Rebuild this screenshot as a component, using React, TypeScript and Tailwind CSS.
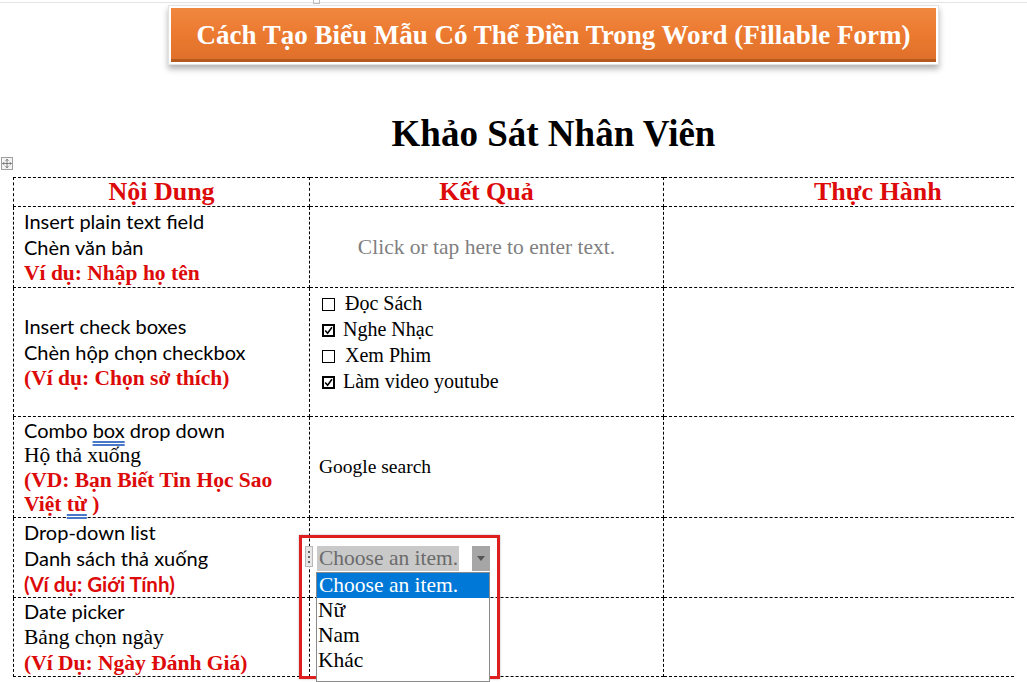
import { Move } from "lucide-react";

const serif = "font-['Liberation_Serif','Times_New_Roman',serif]";
const sans = "font-['Lato','Noto_Sans',sans-serif]";
const red = "text-[#dd0a0a]";

function CheckBox({ checked }: { checked?: boolean }) {
  return (
    <span
      className={`relative inline-block h-[13px] w-[13px] align-[-1px] ${
        checked ? "mr-[8px] border-2 border-black" : "mr-[5px] border border-black"
      }`}
    >
      {checked && (
        <svg viewBox="0 0 9 9" className="absolute left-0 top-0 h-[9px] w-[9px]">
          <path d="M1.2 4.5 L3.6 7.2 L8 1.2" fill="none" stroke="#000" strokeWidth="1.6" />
        </svg>
      )}
    </span>
  );
}

function DropdownOverlay() {
  return (
    <div className="absolute left-[299px] top-[535px] h-[144px] w-[201px] border-[3px] border-[#de1f1f] shadow-[0_0_2px_rgba(0,0,0,0.3)]">
      {/* handle */}
      <div className="absolute left-[3px] top-[8px] flex h-[21px] w-[8px] flex-col items-center justify-center gap-[3px] border border-[#b8b8b8] bg-[#e6e6e6]">
        <span className="h-[2px] w-[2px] bg-[#666]" />
        <span className="h-[2px] w-[2px] bg-[#666]" />
        <span className="h-[2px] w-[2px] bg-[#666]" />
      </div>
      {/* combo field */}
      <div className={`absolute left-[15px] top-[8px] flex h-[25px] w-[173px] items-center ${serif}`}>
        <div className="flex h-full items-center bg-[#c9c9c9] pl-[2px] pr-[1px] text-[21.5px] leading-none text-[#6b6b6b]">
          Choose an item.
        </div>
        <div className="h-full flex-1 bg-white" />
        <div className="flex h-full w-[18px] items-center justify-center bg-[#a6a6a6]">
          <svg viewBox="0 0 8 5" className="h-[5px] w-[8px]">
            <path d="M0 0 H8 L4 5 Z" fill="#555" />
          </svg>
        </div>
      </div>
      {/* list */}
      <div className={`absolute left-[14px] top-[34px] h-[110px] w-[174px] border border-[#8a8a8a] bg-white ${serif} text-[21.5px] leading-[25px] text-black`}>
        <div className="bg-[#0078d7] pl-[2px] text-white">Choose an item.</div>
        <div className="pl-[1px]">Nữ</div>
        <div className="pl-[1px]">Nam</div>
        <div className="pl-[1px]">Khác</div>
      </div>
    </div>
  );
}

export default function App() {
  const cell = "border border-dashed border-black align-middle";
  const head = `${serif} ${red} text-[26px] font-bold leading-[28px]`;
  const redSerif = `${serif} ${red} text-[21.5px] font-bold`;
  return (
    <div className="relative h-[682px] w-[1027px] overflow-hidden bg-white">
      {/* page edge */}
      <div className="absolute left-0 top-[2px] h-px w-full bg-[#e4e4e4]" />
      <div className="absolute left-[313px] top-0 h-[4px] w-[7px] border border-t-0 border-[#bdbdbd]" />

      {/* banner */}
      <div className="pl-[168px] pt-[5px]">
        <div className="w-[771px] border border-[#e2e2e2] bg-white p-[2px] shadow-[0_4px_6px_rgba(0,0,0,0.3)]">
          <div className="flex h-[54px] items-center justify-center border-b-[3px] border-[#b45a1e] bg-gradient-to-b from-[#f08840] via-[#ec7a30] to-[#e0702a] pt-[4px]">
            <span className={`${serif} text-[27px] font-bold text-white`}>
              Cách Tạo Biểu Mẫu Có Thể Điền Trong Word (Fillable Form)
            </span>
          </div>
        </div>
      </div>

      {/* title */}
      <h1 className={`${serif} mt-[47px] pl-[80px] text-center text-[37px] font-bold leading-[44px] text-black`}>
        Khảo Sát Nhân Viên
      </h1>

      {/* move handle */}
      <div className="absolute left-[1px] top-[157px] flex h-[13px] w-[12px] items-center justify-center border border-[#a0a0a0] bg-[#f4f4f4]">
        <Move className="h-[11px] w-[11px] text-[#444]" strokeWidth={1.5} />
      </div>

      {/* table */}
      <table className="absolute left-[13px] top-[177px] w-[1000px] table-fixed border-collapse">
        <colgroup>
          <col className="w-[296px]" />
          <col className="w-[354px]" />
          <col className="w-[350px]" />
        </colgroup>
        <tbody>
          <tr className="h-[29px]">
            <td className={`${cell} ${head} text-center`}>Nội Dung</td>
            <td className={`${cell} ${head} text-center`}>Kết Quả</td>
            <td className={`${cell} border-r-0 ${head} pl-[150px] text-left`}>Thực Hành</td>
          </tr>
          <tr className="h-[81px]">
            <td className={`${cell} pl-[10px] text-[20px] leading-[26px]`}>
              <div className={sans}>Insert plain text field</div>
              <div className={sans}>Chèn văn bản</div>
              <div className={redSerif}>Ví dụ: Nhập họ tên</div>
            </td>
            <td className={`${cell} ${serif} text-center text-[21.5px] text-[#7f7f7f]`}>
              Click or tap here to enter text.
            </td>
            <td className={`${cell} border-r-0`} />
          </tr>
          <tr className="h-[129px]">
            <td className={`${cell} pl-[10px] text-[20px] leading-[26px]`}>
              <div className={sans}>Insert check boxes</div>
              <div className={sans}>Chèn hộp chọn checkbox</div>
              <div className={redSerif}>(Ví dụ: Chọn sở thích)</div>
            </td>
            <td className={`${cell} !align-top pl-[12px] pt-[2px] ${serif} text-[20px] leading-[26px] text-black`}>
              <div><CheckBox /> Đọc Sách</div>
              <div><CheckBox checked />Nghe Nhạc</div>
              <div><CheckBox /> Xem Phim</div>
              <div><CheckBox checked />Làm video youtube</div>
            </td>
            <td className={`${cell} border-r-0`} />
          </tr>
          <tr className="h-[101px]">
            <td className={`${cell} pl-[10px] text-[20px] leading-[25px]`}>
              <div className={sans}>
                Combo <span className="underline decoration-[#4a78c8] decoration-double underline-offset-[3px]">box</span> drop down
              </div>
              <div className={`${serif} text-[21.5px]`}>Hộ thả xuống</div>
              <div className={`${redSerif} leading-[24px]`}>
                (VD: Bạn Biết Tin Học Sao
                <br />
                Việt <span className="underline decoration-[#4a78c8] decoration-double underline-offset-[3px]">từ</span> )
              </div>
            </td>
            <td className={`${cell} pl-[9px] ${serif} text-[19.5px] text-black`}>Google search</td>
            <td className={`${cell} border-r-0`} />
          </tr>
          <tr className="h-[80px]">
            <td className={`${cell} pl-[10px] text-[20px] leading-[26px]`}>
              <div className={sans}>Drop-down list</div>
              <div className={sans}>Danh sách thả xuống</div>
              <div className={`${sans} ${red} text-[20.5px] font-bold`}>(Ví dụ: Giới Tính)</div>
            </td>
            <td className={cell} />
            <td className={`${cell} border-r-0`} />
          </tr>
          <tr className="h-[77px]">
            <td className={`${cell} pl-[10px] text-[20px] leading-[26px]`}>
              <div className={sans}>Date picker</div>
              <div className={`${serif} text-[21.5px]`}>Bảng chọn ngày</div>
              <div className={redSerif}>(Ví Dụ: Ngày Đánh Giá)</div>
            </td>
            <td className={cell} />
            <td className={`${cell} border-r-0`} />
          </tr>
        </tbody>
      </table>

      <DropdownOverlay />
    </div>
  );
}
